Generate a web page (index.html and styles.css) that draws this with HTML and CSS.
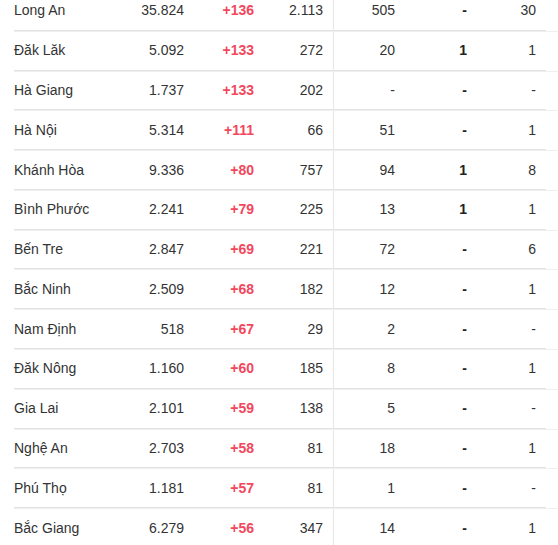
FILE: index.html
```html
<!DOCTYPE html>
<html lang="vi">
<head>
<meta charset="utf-8">
<link rel="stylesheet" href="styles.css">
</head>
<body>
<div class="table">
  <div class="row"><div class="cells"><span class="name">Long An</span><span class="num">35.824</span><span class="num up">+136</span><span class="num sep">2.113</span><span class="num">505</span><span class="num strong">-</span><span class="num">30</span></div></div>
  <div class="row"><div class="cells"><span class="name">Đăk Lăk</span><span class="num">5.092</span><span class="num up">+133</span><span class="num sep">272</span><span class="num">20</span><span class="num strong">1</span><span class="num">1</span></div></div>
  <div class="row"><div class="cells"><span class="name">Hà Giang</span><span class="num">1.737</span><span class="num up">+133</span><span class="num sep">202</span><span class="num">-</span><span class="num strong">-</span><span class="num">-</span></div></div>
  <div class="row"><div class="cells"><span class="name">Hà Nội</span><span class="num">5.314</span><span class="num up">+111</span><span class="num sep">66</span><span class="num">51</span><span class="num strong">-</span><span class="num">1</span></div></div>
  <div class="row"><div class="cells"><span class="name">Khánh Hòa</span><span class="num">9.336</span><span class="num up">+80</span><span class="num sep">757</span><span class="num">94</span><span class="num strong">1</span><span class="num">8</span></div></div>
  <div class="row"><div class="cells"><span class="name">Bình Phước</span><span class="num">2.241</span><span class="num up">+79</span><span class="num sep">225</span><span class="num">13</span><span class="num strong">1</span><span class="num">1</span></div></div>
  <div class="row"><div class="cells"><span class="name">Bến Tre</span><span class="num">2.847</span><span class="num up">+69</span><span class="num sep">221</span><span class="num">72</span><span class="num strong">-</span><span class="num">6</span></div></div>
  <div class="row"><div class="cells"><span class="name">Bắc Ninh</span><span class="num">2.509</span><span class="num up">+68</span><span class="num sep">182</span><span class="num">12</span><span class="num strong">-</span><span class="num">1</span></div></div>
  <div class="row"><div class="cells"><span class="name">Nam Định</span><span class="num">518</span><span class="num up">+67</span><span class="num sep">29</span><span class="num">2</span><span class="num strong">-</span><span class="num">-</span></div></div>
  <div class="row"><div class="cells"><span class="name">Đăk Nông</span><span class="num">1.160</span><span class="num up">+60</span><span class="num sep">185</span><span class="num">8</span><span class="num strong">-</span><span class="num">1</span></div></div>
  <div class="row"><div class="cells"><span class="name">Gia Lai</span><span class="num">2.101</span><span class="num up">+59</span><span class="num sep">138</span><span class="num">5</span><span class="num strong">-</span><span class="num">-</span></div></div>
  <div class="row"><div class="cells"><span class="name">Nghệ An</span><span class="num">2.703</span><span class="num up">+58</span><span class="num sep">81</span><span class="num">18</span><span class="num strong">-</span><span class="num">1</span></div></div>
  <div class="row"><div class="cells"><span class="name">Phú Thọ</span><span class="num">1.181</span><span class="num up">+57</span><span class="num sep">81</span><span class="num">1</span><span class="num strong">-</span><span class="num">-</span></div></div>
  <div class="row"><div class="cells"><span class="name">Bắc Giang</span><span class="num">6.279</span><span class="num up">+56</span><span class="num sep">347</span><span class="num">14</span><span class="num strong">-</span><span class="num">1</span></div></div>
</div>
</body>
</html>
```

FILE: styles.css
```css
html, body {
  margin: 0;
  padding: 0;
  background: #ffffff;
  overflow: hidden;
}

body {
  font-family: "Liberation Sans", Arial, sans-serif;
  font-size: 14px;
  line-height: 20px;
  color: #333333;
}

.table {
  margin-top: -8px;
  padding-left: 14px;
}

.row {
  border-bottom: 1px solid #efefef;
}

.cells {
  width: 532px;
  display: grid;
  grid-template-columns: 110px 70px 70px 70px 71px 72px 69px;
  border-bottom: 1px solid #e3e3e3;
}

.cells > span {
  padding: 8.4px 10px 9.4px 0;
  white-space: nowrap;
}

.name {
  text-align: left;
}

.num {
  text-align: right;
}

.sep {
  border-right: 1px solid #e6e6e6;
}

.up {
  color: #f2475c;
  font-weight: bold;
}

.strong {
  font-weight: bold;
  color: #222222;
}
```
